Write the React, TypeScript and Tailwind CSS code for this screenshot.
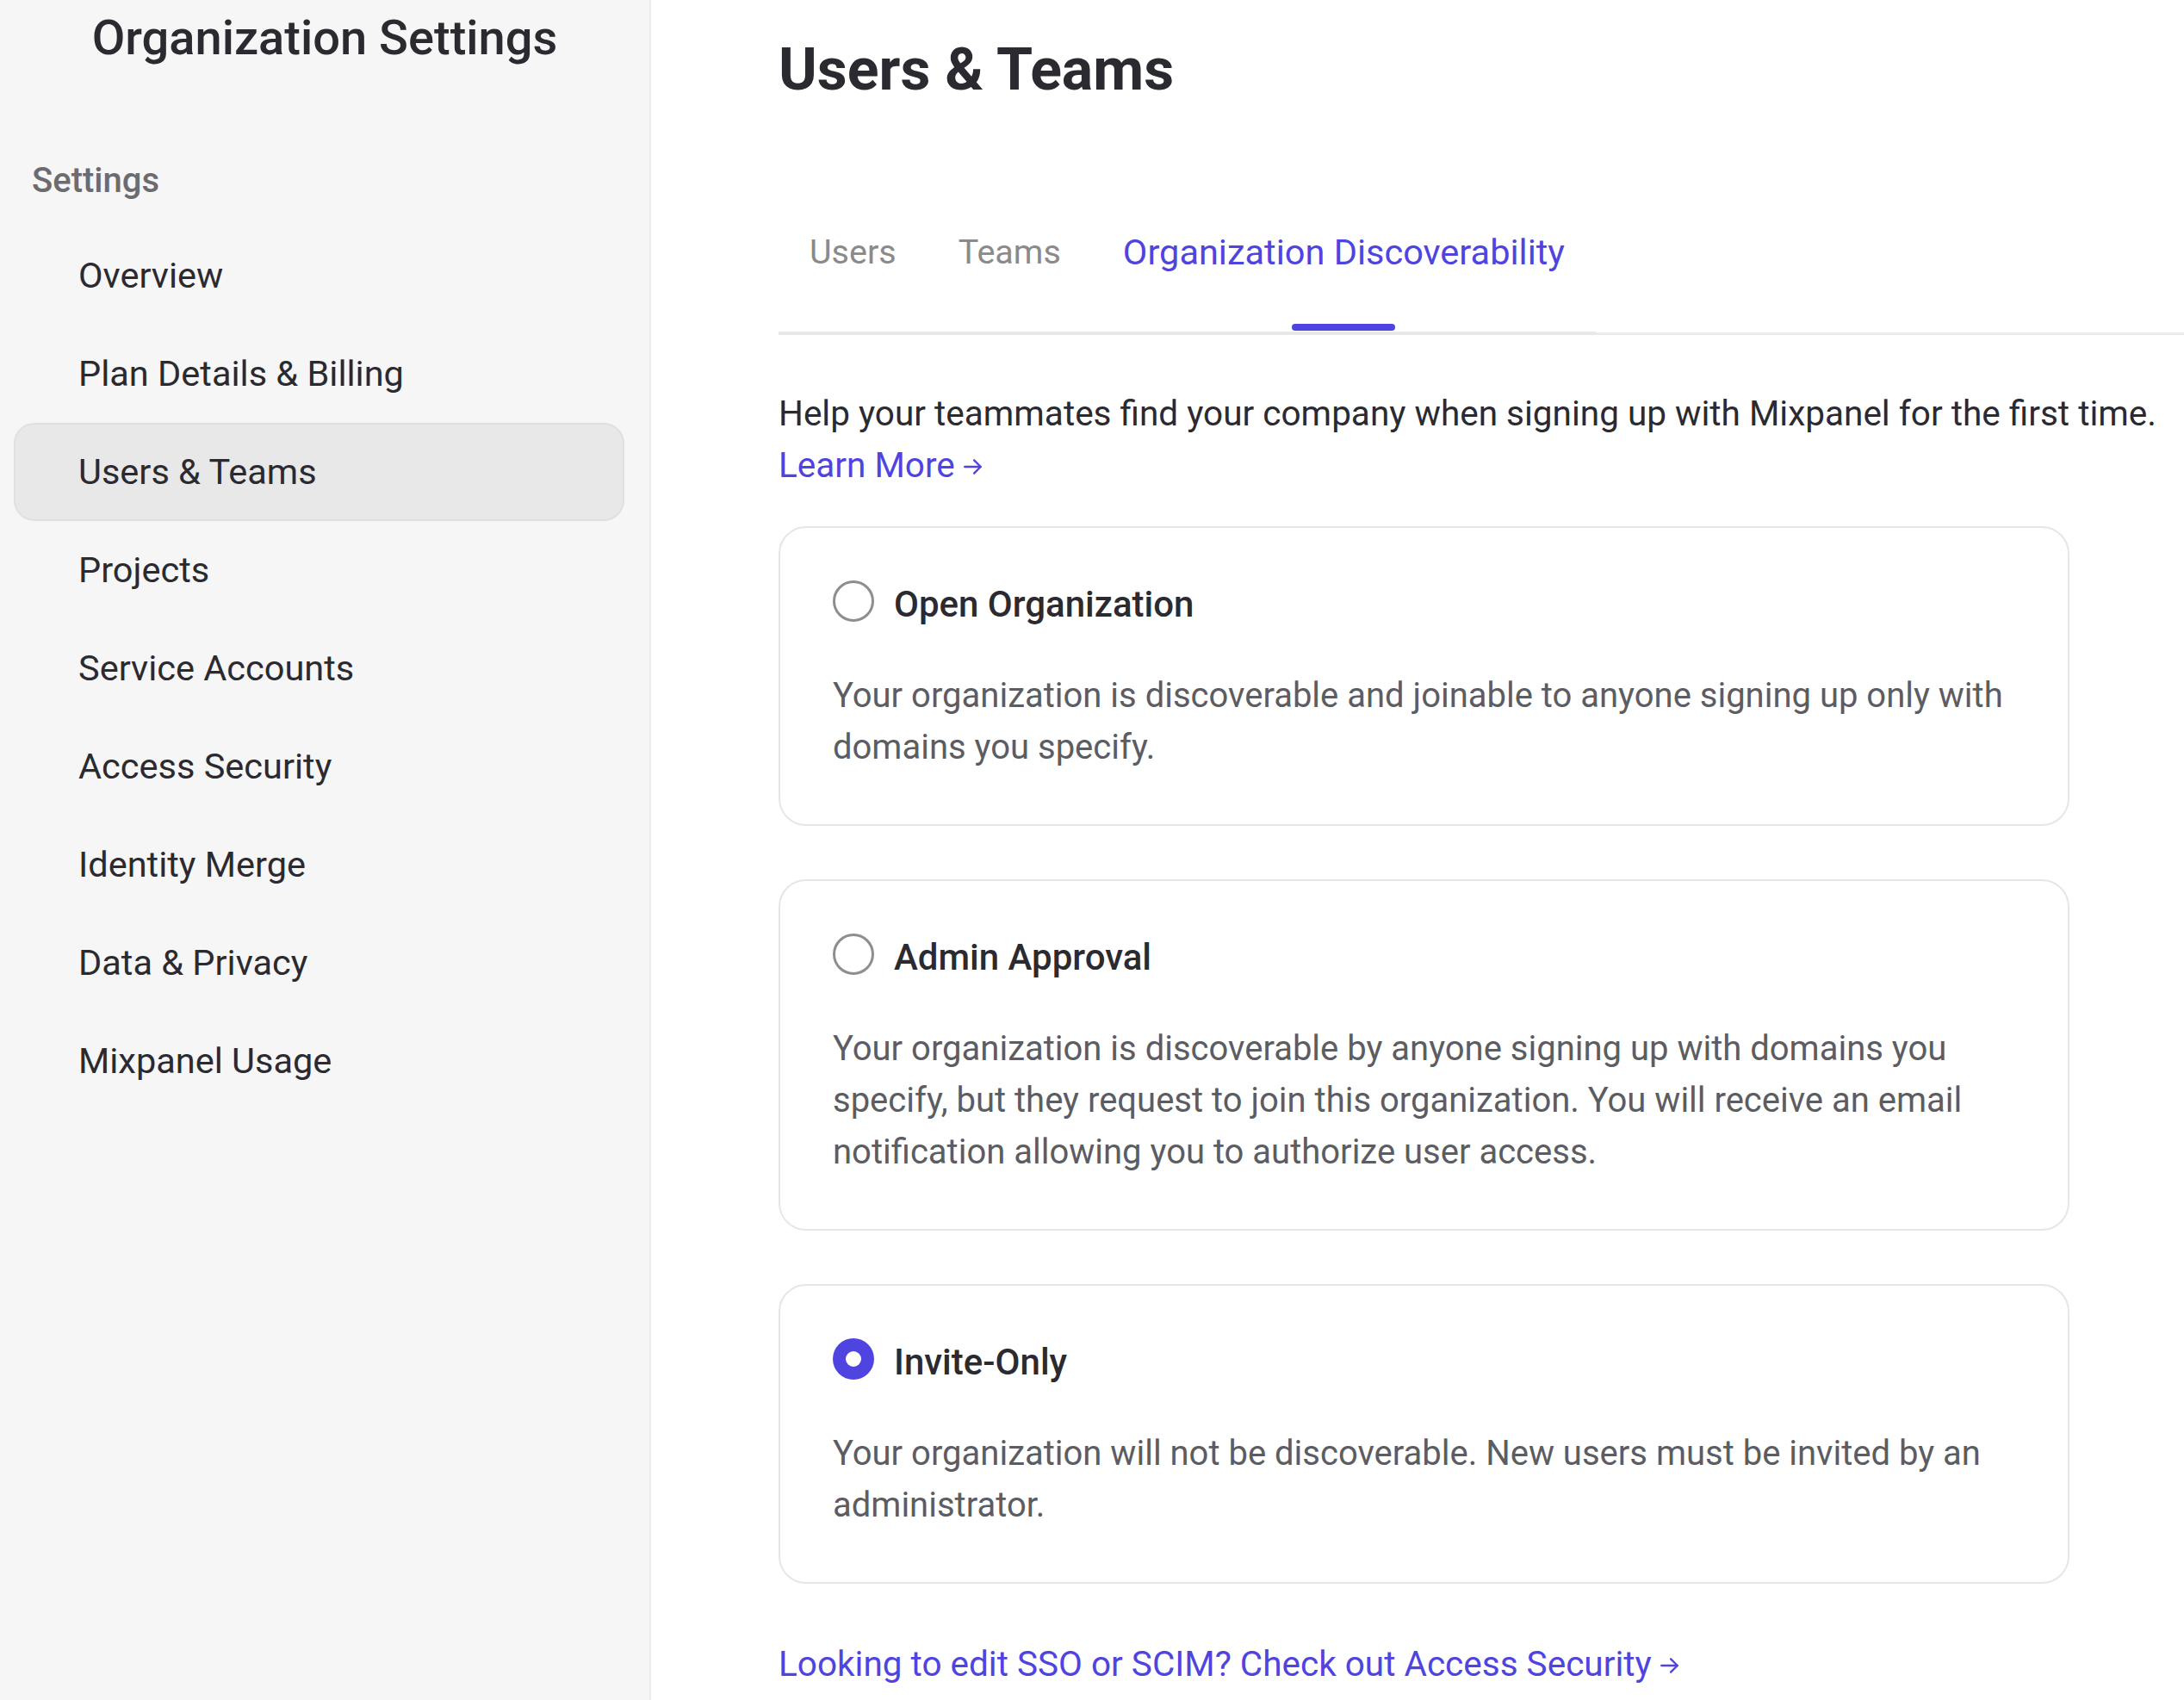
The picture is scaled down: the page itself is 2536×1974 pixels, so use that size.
import React from "react";

const navItems = [
  "Overview",
  "Plan Details & Billing",
  "Users & Teams",
  "Projects",
  "Service Accounts",
  "Access Security",
  "Identity Merge",
  "Data & Privacy",
  "Mixpanel Usage",
];

type Opt = { title: string; desc: string; selected?: boolean };

const options: Opt[] = [
  {
    title: "Open Organization",
    desc: "Your organization is discoverable and joinable to anyone signing up only with domains you specify.",
  },
  {
    title: "Admin Approval",
    desc: "Your organization is discoverable by anyone signing up with domains you specify, but they request to join this organization. You will receive an email notification allowing you to authorize user access.",
  },
  {
    title: "Invite-Only",
    desc: "Your organization will not be discoverable. New users must be invited by an administrator.",
    selected: true,
  },
];

function Radio({ selected }: { selected?: boolean }) {
  if (selected) {
    return (
      <span className="mb-[8px] flex h-[48px] w-[48px] shrink-0 items-center justify-center rounded-full bg-[#4f44e0]">
        <span className="h-[18px] w-[18px] rounded-full bg-white" />
      </span>
    );
  }
  return (
    <span className="mb-[8px] block h-[48px] w-[48px] shrink-0 rounded-full border-[3px] border-[#8e8e8e] bg-white" />
  );
}

function Arrow() {
  return (
    <svg
      className="ml-[8px] inline-block h-[26px] w-[26px] align-[-1px]"
      viewBox="0 0 24 24"
      fill="none"
      stroke="currentColor"
      strokeWidth="2.2"
      strokeLinecap="round"
      strokeLinejoin="round"
    >
      <path d="M3 12h17" />
      <path d="M13 5l7 7-7 7" />
    </svg>
  );
}

export default function App() {
  return (
    <div className="flex h-[1974px] w-[2536px] overflow-hidden bg-white font-['Roboto',sans-serif] text-[#2a2a30]">
      <aside className="w-[756px] shrink-0 border-r-2 border-[#ececec] bg-[#f6f6f6]">
        <h1 className="pt-[12px] text-center text-[56px] font-medium leading-[64px] text-[#2a2a30]">
          Organization Settings
        </h1>
        <div className="mt-[106px] pl-[37px] text-[40px] font-medium leading-[56px] text-[#6b6b70]">
          Settings
        </div>
        <nav className="mt-[25px] flex flex-col">
          {navItems.map((item) => {
            const active = item === "Users & Teams";
            return (
              <div
                key={item}
                className={
                  active
                    ? "ml-[16px] flex h-[114px] w-[709px] items-center rounded-[24px] border-2 border-[#e0e0e0] bg-[#e8e8e8] pl-[73px] text-[41.5px] leading-[56px] text-[#2a2a30]"
                    : "ml-[16px] flex h-[114px] w-[709px] items-center pl-[75px] text-[41.5px] leading-[56px] text-[#2a2a30]"
                }
              >
                {item}
              </div>
            );
          })}
        </nav>
      </aside>

      <main className="flex-1 pl-[148px] pt-[41px]">
        <h2 className="text-[68px] font-bold leading-[80px] text-[#2a2a30]">Users &amp; Teams</h2>

        <div className="mt-[144px] flex items-end">
          <div className="flex border-b-4 border-[#e8e8e8]">
            <div className="px-[36px] pb-[64px] text-[39.5px] leading-[56px] text-[#8a8a8a]">Users</div>
            <div className="px-[36px] pb-[64px] text-[39.5px] leading-[56px] text-[#8a8a8a]">Teams</div>
            <div className="relative flex justify-center px-[36px] pb-[64px] text-[41.5px] leading-[56px] text-[#4f44e0]">
              Organization Discoverability
              <span className="absolute bottom-[1px] h-[8px] w-[120px] rounded-full bg-[#4f44e0]" />
            </div>
          </div>
          <div className="flex-1 border-b-[3px] border-[#ebebeb]" />
        </div>

        <p className="mt-[61px] text-[40.5px] leading-[60px] text-[#2a2a30]">
          Help your teammates find your company when signing up with Mixpanel for the first time.
        </p>
        <a className="block text-[40.5px] leading-[60px] text-[#4f44e0]">
          Learn More
          <Arrow />
        </a>

        <div className="mt-[41px] flex w-[1499px] flex-col gap-[62px]">
          {options.map((o) => (
            <div
              key={o.title}
              className="rounded-[32px] border-2 border-[#e6e6e6] bg-white pb-[59px] pl-[61px] pr-[40px] pt-[61px]"
            >
              <div className="flex items-center gap-[23px]">
                <Radio selected={o.selected} />
                <span className="text-[42px] font-medium leading-[56px] text-[#2a2a30]">{o.title}</span>
              </div>
              <p className="mt-[48px] text-[40px] leading-[60px] text-[#5c5c63]">{o.desc}</p>
            </div>
          ))}
        </div>

        <a className="mt-[63px] block text-[40.5px] leading-[60px] text-[#4f44e0]">
          Looking to edit SSO or SCIM? Check out Access Security
          <Arrow />
        </a>
      </main>
    </div>
  );
}
